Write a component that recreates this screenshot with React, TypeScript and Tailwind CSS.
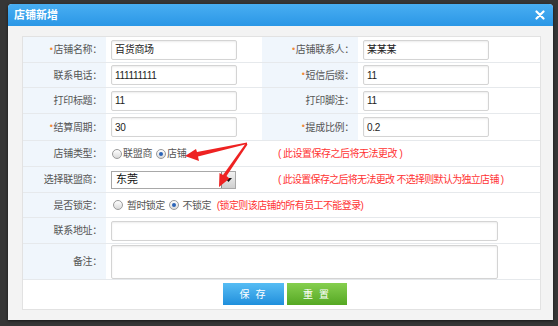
import React from "react";

const FONT = "font-['Liberation_Sans','Noto_Sans_CJK_SC',sans-serif]";

function Label({ text, star, className = "" }: { text: string; star?: boolean; className?: string }) {
  return (
    <div className={`flex items-center justify-end bg-[#f0f6fc] pr-[4px] text-[10px] tracking-[-0.3px] text-[#555] ${className}`}>
      {star && <span className="mr-[1px] text-[9px] text-[#f08a3c]">•</span>}
      {text}：
    </div>
  );
}

function Input({ value = "", w = "w-[126px]", h = "h-[20px]" }: { value?: string; w?: string; h?: string }) {
  return (
    <div
      className={`${w} ${h} ml-[5px] flex items-center rounded-[2px] border border-[#d4d4d4] bg-white px-[3px] text-[10px] tracking-[-0.3px] text-[#222] shadow-[inset_0_1px_2px_rgba(0,0,0,0.08)]`}
    >
      {value}
    </div>
  );
}

function Radio({ checked }: { checked?: boolean }) {
  return (
    <span className="inline-flex h-[10px] w-[10px] items-center justify-center rounded-full border border-[#9a9a9a] bg-gradient-to-b from-white to-[#d9d9d9]">
      {checked && <span className="h-[4px] w-[4px] rounded-full bg-[#2b64b8]" />}
    </span>
  );
}

function Row({ h, children }: { h: string; children: React.ReactNode }) {
  return <div className={`flex ${h} border-b border-[#e6e9ec]`}>{children}</div>;
}

export default function App() {
  return (
    <div className={`relative h-[326px] w-[558px] overflow-hidden bg-[#363636] pl-[8px] pt-[4px] ${FONT}`}>
      <div className="flex h-[316px] w-[545px] flex-col rounded-t-[4px] bg-[#f3f3f3] shadow-[0_1px_3px_rgba(0,0,0,0.6)]">
        {/* header */}
        <div className="flex h-[22px] items-center justify-between rounded-t-[4px] bg-gradient-to-b from-[#48aef2] to-[#2a97e6] pl-[6px] pr-[8px]">
          <span className="text-[11px] font-bold text-white">店铺新增</span>
          <svg width="10" height="10" viewBox="0 0 10 10">
            <path d="M1.5 1.5 L8.5 8.5 M8.5 1.5 L1.5 8.5" stroke="white" strokeWidth="2.2" strokeLinecap="round" />
          </svg>
        </div>

        {/* panel */}
        <div className="ml-[14px] mt-[10px] flex h-[274px] w-[519px] flex-col border border-[#e2e2e2] bg-white">
          <Row h="h-[26px]">
            <Label text="店铺名称" star className="w-[83px]" />
            <div className="flex w-[156px] items-center"><Input value="百货商场" /></div>
            <Label text="店铺联系人" star className="w-[96px]" />
            <div className="flex w-[182px] items-center"><Input value="某某某" /></div>
          </Row>
          <Row h="h-[25px]">
            <Label text="联系电话" className="w-[83px]" />
            <div className="flex w-[156px] items-center"><Input value="111111111" /></div>
            <Label text="短信后缀" star className="w-[96px]" />
            <div className="flex w-[182px] items-center"><Input value="11" /></div>
          </Row>
          <Row h="h-[26px]">
            <Label text="打印标题" className="w-[83px]" />
            <div className="flex w-[156px] items-center"><Input value="11" /></div>
            <Label text="打印脚注" className="w-[96px]" />
            <div className="flex w-[182px] items-center"><Input value="11" /></div>
          </Row>
          <Row h="h-[27px]">
            <Label text="结算周期" star className="w-[83px]" />
            <div className="flex w-[156px] items-center"><Input value="30" /></div>
            <Label text="提成比例" star className="w-[96px]" />
            <div className="flex w-[182px] items-center"><Input value="0.2" /></div>
          </Row>
          <Row h="h-[26px]">
            <Label text="店铺类型" className="w-[83px]" />
            <div className="flex w-[156px] items-center gap-[1px] pl-[6px] text-[10px] tracking-[-0.3px] text-[#555]">
              <Radio />
              <span className="mr-[3px]">联盟商</span>
              <Radio checked />
              <span>店铺</span>
            </div>
            <div className="flex flex-1 items-center pl-[16px] text-[10px] tracking-[-0.5px] text-[#ff3333]">( 此设置保存之后将无法更改 )</div>
          </Row>
          <Row h="h-[26px]">
            <Label text="选择联盟商" className="w-[83px]" />
            <div className="flex w-[156px] items-center">
              <div className="ml-[5px] flex h-[18px] w-[125px] items-center justify-between border border-[#a8a8a8] bg-white pl-[4px] text-[11px] text-[#111]">
                东莞
                <span className="flex h-[16px] w-[14px] items-center justify-center border-l border-[#888] bg-gradient-to-b from-[#f2f2f2] to-[#cfcfcf]">
                  <svg width="7" height="4" viewBox="0 0 7 4"><path d="M0 0 H7 L3.5 4 Z" fill="#111" /></svg>
                </span>
              </div>
            </div>
            <div className="flex flex-1 items-center pl-[16px] text-[10px] tracking-[-0.7px] text-[#ff3333]">
              ( 此设置保存之后将无法更改 不选择则默认为独立店铺 )
            </div>
          </Row>
          <Row h="h-[25px]">
            <Label text="是否锁定" className="w-[83px]" />
            <div className="flex flex-1 items-center pl-[7px] text-[10px] tracking-[-0.6px] text-[#555]">
              <Radio />
              <span className="ml-[4px] mr-[4px]">暂时锁定</span>
              <Radio checked />
              <span className="ml-[4px]">不锁定</span>
              <span className="ml-[6px] text-[#ff3333]">(锁定则该店铺的所有员工不能登录)</span>
            </div>
          </Row>
          <Row h="h-[26px]">
            <Label text="联系地址" className="w-[83px]" />
            <div className="flex flex-1 items-center"><Input w="w-[387px]" /></div>
          </Row>
          <Row h="h-[36px]">
            <Label text="备注" className="w-[83px]" />
            <div className="flex flex-1 items-end"><Input w="w-[387px]" h="h-[34px]" /></div>
          </Row>

          <div className="flex justify-center gap-[3px] pl-[6px] pt-[3px]">
            <button className="flex h-[22px] w-[61px] items-center justify-center bg-gradient-to-b from-[#56bdf4] to-[#1e8fdc] pl-[5px] text-[10px] tracking-[6px] text-white">
              保存
            </button>
            <button className="flex h-[22px] w-[60px] items-center justify-center bg-gradient-to-b from-[#86cf4e] to-[#55a822] pl-[5px] text-[10px] tracking-[6px] text-white">
              重置
            </button>
          </div>
        </div>
      </div>

      {/* annotation arrows */}
      <svg className="pointer-events-none absolute left-0 top-0" width="558" height="326" viewBox="0 0 558 326">
        <polygon points="247,142.5 247,144 198,156.5 199,161 185,156 196,149 197,152" fill="#ee2222" />
        <polygon points="246,143 247.5,144.5 226.5,176 229.5,178.5 219,187 219.5,173 223,175" fill="#ee2222" />
      </svg>
    </div>
  );
}
